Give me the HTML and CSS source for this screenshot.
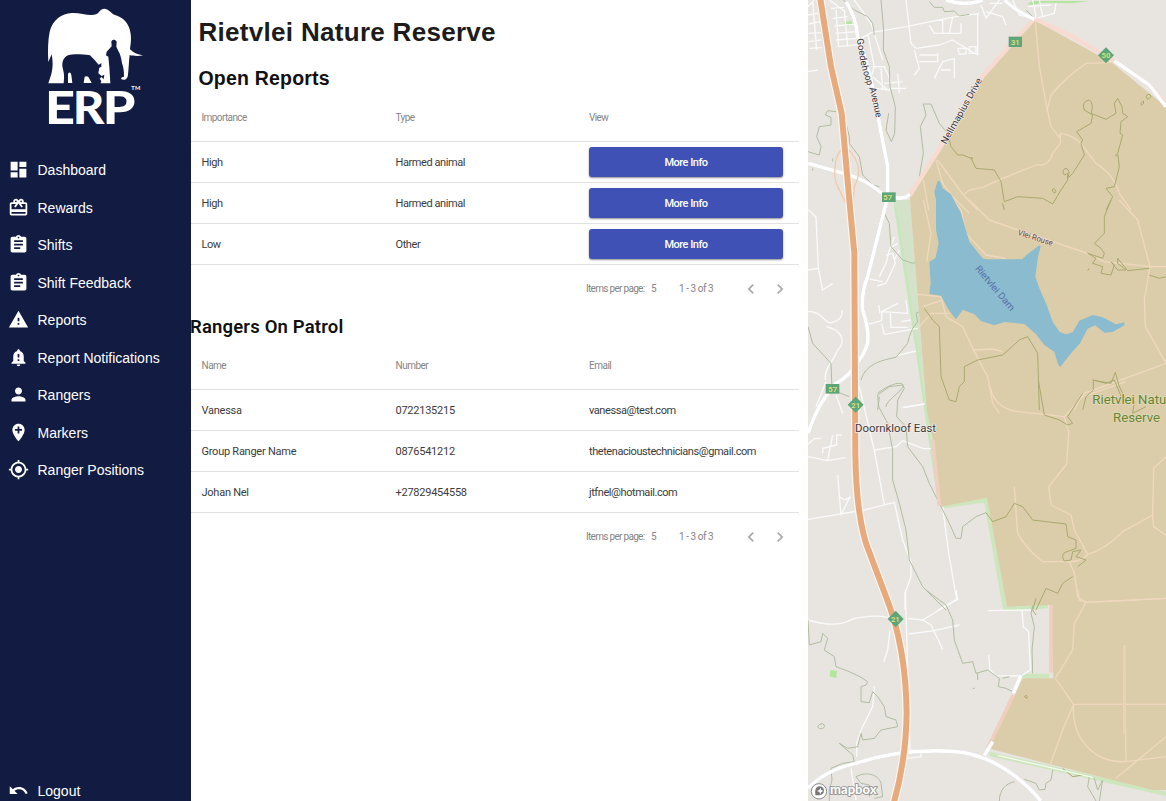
FILE: index.html
```html
<!DOCTYPE html>
<html lang="en">
<head>
<meta charset="utf-8">
<title>ERP Dashboard</title>
<link rel="stylesheet" href="styles.css">
</head>
<body>
<div class="app">
<aside class="sidebar">
  <svg class="logo" viewBox="0 0 573 420">
    <path fill="#fff" d="M145 186C143 150 144 120 149 95C158 60 185 40 215 39C245 38 270 50 290 42C300 36 300 27 313 26C326 26 330 38 345 45C368 52 382 65 389 88C396 112 392 130 390 148C400 158 412 164 429 166C415 169 400 168 389 165C386 190 386 215 383 230C378 241 370 240 364 238C362 233 366 230 372 230C372 215 371 203 366 190C364 175 361 162 355 153L349 140L350 125C345 117 337 118 334 124L335 139L320 155L318 166L325 170L328 200L331 250H301C306 246 304 241 299 236L305 231L311 238L313 224L305 228L295 220L298 203L304 200V190L296 194C288 185 282 178 270 166C245 163 222 161 204 166C188 174 184 190 189 208C194 225 192 238 191 250H145L154 222C160 200 158 180 155 163Z"/>
    <path fill="#fff" d="M204 221Q211 213 214 225L217 249H204ZM254 230Q261 227 266 232L275 249H251Z"/>
    <text class="logo-name" y="371"><tspan x="135" textLength="90" lengthAdjust="spacingAndGlyphs">E</tspan><tspan x="218" textLength="95" lengthAdjust="spacingAndGlyphs">R</tspan><tspan x="308" textLength="98" lengthAdjust="spacingAndGlyphs">P</tspan></text>
    <text class="logo-tm" x="394" y="271" textLength="27">TM</text>
  </svg>
  <nav class="nav">
    <a class="nav-item"><svg viewBox="0 0 24 24"><path d="M3 13h8V3H3v10zm0 8h8v-6H3v6zm10 0h8V11h-8v10zm0-18v6h8V3h-8z"/></svg>Dashboard</a>
    <a class="nav-item"><svg viewBox="0 0 24 24"><path d="M20 6h-2.18c.11-.31.18-.65.18-1 0-1.66-1.34-3-3-3-1.05 0-1.96.54-2.5 1.35l-.5.67-.5-.68C10.96 2.54 10.05 2 9 2 7.34 2 6 3.34 6 5c0 .35.07.69.18 1H4c-1.11 0-1.99.89-1.99 2L2 19c0 1.11.89 2 2 2h16c1.11 0 2-.89 2-2V8c0-1.11-.89-2-2-2zm-5-2c.55 0 1 .45 1 1s-.45 1-1 1-1-.45-1-1 .45-1 1-1zM9 4c.55 0 1 .45 1 1s-.45 1-1 1-1-.45-1-1 .45-1 1-1zm11 15H4v-2h16v2zm0-5H4V8h5.080L7 10.830 8.620 12 11 8.760l1-1.360 1 1.360L15.380 12 17 10.830 14.920 8H20v6z"/></svg>Rewards</a>
    <a class="nav-item"><svg viewBox="0 0 24 24"><path d="M19 3h-4.180C14.400 1.840 13.300 1 12 1c-1.300 0-2.400.840-2.820 2H5c-1.100 0-2 .9-2 2v14c0 1.100.9 2 2 2h14c1.100 0 2-.9 2-2V5c0-1.100-.9-2-2-2zm-7 0c.55 0 1 .45 1 1s-.45 1-1 1-1-.45-1-1 .45-1 1-1zm2 14H7v-2h7v2zm3-4H7v-2h10v2zm0-4H7V7h10v2z"/></svg>Shifts</a>
    <a class="nav-item"><svg viewBox="0 0 24 24"><path d="M19 3h-4.180C14.400 1.840 13.300 1 12 1c-1.300 0-2.400.840-2.820 2H5c-1.100 0-2 .9-2 2v14c0 1.100.9 2 2 2h14c1.100 0 2-.9 2-2V5c0-1.100-.9-2-2-2zm-7 0c.55 0 1 .45 1 1s-.45 1-1 1-1-.45-1-1 .45-1 1-1zm2 14H7v-2h7v2zm3-4H7v-2h10v2zm0-4H7V7h10v2z"/></svg>Shift Feedback</a>
    <a class="nav-item"><svg viewBox="0 0 24 24"><path d="M1 21h22L12 2 1 21zm12-3h-2v-2h2v2zm0-4h-2v-4h2v4z"/></svg>Reports</a>
    <a class="nav-item"><svg viewBox="0 0 24 24"><path d="M18 16v-5c0-3.070-1.640-5.640-4.500-6.320V4c0-.83-.67-1.500-1.500-1.500s-1.500.67-1.500 1.500v.68C7.630 5.360 6 7.920 6 11v5l-2 2v1h16v-1l-2-2zm-5 0h-2v-2h2v2zm0-4h-2V8h2v4zm-1 10c1.100 0 2-.9 2-2h-4c0 1.100.89 2 2 2z"/></svg>Report Notifications</a>
    <a class="nav-item"><svg viewBox="0 0 24 24"><path d="M12 12c2.210 0 4-1.790 4-4s-1.790-4-4-4-4 1.790-4 4 1.790 4 4 4zm0 2c-2.670 0-8 1.340-8 4v2h16v-2c0-2.660-5.330-4-8-4z"/></svg>Rangers</a>
    <a class="nav-item"><svg viewBox="0 0 24 24"><path d="M12 2C8.140 2 5 5.140 5 9c0 5.250 7 13 7 13s7-7.750 7-13c0-3.860-3.140-7-7-7zm4 8h-3v3h-2v-3H8V8h3V5h2v3h3v2z"/></svg>Markers</a>
    <a class="nav-item"><svg viewBox="0 0 24 24"><path d="M12 8c-2.210 0-4 1.790-4 4s1.790 4 4 4 4-1.790 4-4-1.790-4-4-4zm8.940 3c-.46-4.170-3.770-7.480-7.940-7.940V1h-2v2.060C6.830 3.520 3.520 6.830 3.060 11H1v2h2.060c.46 4.170 3.770 7.480 7.940 7.940V23h2v-2.060c4.170-.46 7.480-3.770 7.940-7.940H23v-2h-2.060zM12 19c-3.870 0-7-3.130-7-7s3.130-7 7-7 7 3.130 7 7-3.130 7-7 7z"/></svg>Ranger Positions</a>
  </nav>
  <a class="nav-item logout"><svg viewBox="0 0 24 24"><path d="M12.500 8c-2.650 0-5.050.990-6.900 2.600L2 7v9h9l-3.620-3.620c1.390-1.160 3.160-1.880 5.120-1.880 3.540 0 6.550 2.310 7.600 5.500l2.370-.780C21.080 11.030 17.150 8 12.500 8z"/></svg>Logout</a>
</aside>

<main class="content">
  <h1 class="title">Rietvlei Nature Reserve</h1>
  <h2 class="subtitle">Open Reports</h2>
  <section class="table">
    <div class="row head"><span>Importance</span><span>Type</span><span>View</span></div>
    <div class="row"><span>High</span><span>Harmed animal</span><button class="info">More Info</button></div>
    <div class="row"><span>High</span><span>Harmed animal</span><button class="info">More Info</button></div>
    <div class="row"><span>Low</span><span>Other</span><button class="info">More Info</button></div>
    <div class="pager"><span class="per">Items per page:</span><span class="size">5</span><span class="range">1 - 3 of 3</span>
      <svg viewBox="0 0 24 24"><path d="M15.410 7.410L14 6l-6 6 6 6 1.410-1.410L10.830 12z"/></svg><svg viewBox="0 0 24 24"><path d="M10 6L8.590 7.410 13.170 12l-4.580 4.590L10 18l6-6z"/></svg></div>
  </section>
  <h2 class="subtitle patrol">Rangers On Patrol</h2>
  <section class="table people">
    <div class="row head"><span>Name</span><span>Number</span><span>Email</span></div>
    <div class="row"><span>Vanessa</span><span>0722135215</span><span class="mail">vanessa@test.com</span></div>
    <div class="row"><span>Group Ranger Name</span><span>0876541212</span><span class="mail">thetenacioustechnicians@gmail.com</span></div>
    <div class="row"><span>Johan Nel</span><span>+27829454558</span><span class="mail">jtfnel@hotmail.com</span></div>
    <div class="pager"><span class="per">Items per page:</span><span class="size">5</span><span class="range">1 - 3 of 3</span>
      <svg viewBox="0 0 24 24"><path d="M15.410 7.410L14 6l-6 6 6 6 1.410-1.410L10.830 12z"/></svg><svg viewBox="0 0 24 24"><path d="M10 6L8.590 7.410 13.170 12l-4.580 4.590L10 18l6-6z"/></svg></div>
  </section>
</main>

<svg class="map" viewBox="6 0 1074 2403" preserveAspectRatio="none">
  <rect class="land" x="6" width="1074" height="2403"/>
  <!-- parks and reserve border -->
  <path class="park" d="M113 66L138 62V76L118 78ZM662 12L680 3H850L800 10L710 8L680 15ZM72 2010L93 2012L91 2034L71 2030Z"/>
  <path class="soft" d="M262 600H312L362 1230L405 1520L358 1190L330 1010Z"/>
  <path class="edge" d="M268 620L330 1030L356 1210L400 1515"/>
  <path class="park-line" d="M405 1520L540 1500L597 1825L725 1818M645 2028H730"/>
  <path class="park-line" d="M550 2262L860 2332L1080 2382"/>
  <!-- local roads -->
  <g class="street">
    <path d="M145 0L195 70L230 180M150 125L195 98L300 80L450 50L520 40M300 0L315 130L330 145L400 135M325 150L340 205L325 225M340 165H398M340 185H395V160M400 135L440 120L515 165V40M385 235L410 185L445 175V235M405 210H435M370 75L385 100H465V70M410 55V100M440 50L430 100M185 100L205 200L185 260M200 200H235L255 245M200 230L245 270M225 205L230 270M235 250L290 245M275 220L280 280M250 265L300 265M255 270L205 265M455 145H480V162H460ZM490 140H510V160H490ZM620 0L640 45L690 55L745 40L750 10M665 20L735 15M680 0L690 50M700 0L710 48M70 0L118 35M75 25L115 22M80 55L125 50M85 78L145 73M88 100L150 95M90 120L155 115M95 140L160 134M90 30L98 140M115 30L125 140M6 20L25 0M6 45L35 40M8 72L42 65M8 100L45 98M8 125L45 120M10 145L47 143M20 5L32 150M6 215L35 210M525 15L540 55L580 0M540 35L590 50L600 75M550 10H590"/>
    <path transform="translate(0,600)" d="M6 30L30 50L37 205L50 270L80 250M6 210L37 205M6 335C50 330 55 380 85 365C105 360 110 340 108 330M60 380C110 390 120 425 95 450C80 490 55 500 58 540M265 110L250 150L240 190L220 230M250 145L275 130M240 165L260 160L268 190L240 250L213 258M190 237L230 245M185 373L227 362V335L275 310M218 315L222 340M265 180L280 150M227 335L305 340L300 300M253 340L255 382H305M227 370L235 403L335 385M275 466L330 453M290 622L356 612M315 360L285 365M90 585L110 640M30 620L60 545"/>
    <path transform="translate(0,1140)" d="M6 230L65 242L118 233M65 240L80 165M6 192L25 176L45 175M50 220V205L92 195V165H107M95 285L105 405L132 350M100 350L115 360L135 350M6 418L175 390L265 367L290 480L315 545V590L297 640V690M160 20L205 212L235 373M205 210L270 200L290 182L350 205L375 206M292 83L355 72M410 380L428 520L452 658L395 690"/>
    <path transform="translate(0,1770)" d="M6 90C70 110 110 105 140 87C180 78 210 75 245 82M305 85L350 90L400 60L455 28L450 0M350 90L375 105L410 178M308 132L385 122L460 105M298 0L312 480M252 120L245 180L233 215M547 62L675 60M648 62L652 110L668 125L673 240L645 258L570 257L552 240L548 195M205 290L200 350L165 420L152 460V500M310 480L345 482V500L305 505M135 535L150 630"/>
  </g>
  <!-- contours -->
  <g class="contour">
    <path d="M225 0L233 90L232 150L250 200L252 260L268 320L266 400L256 425L240 390L248 340M6 455L40 465L45 440L32 410L40 380L75 375V352L58 345L65 332L90 335M115 350L130 410V430L160 470L170 525L200 555L220 560M112 0L145 30L185 50L200 70L205 105M340 530L352 460L343 380L360 345L352 312L375 312L400 370L425 400M370 5L385 22H410L415 35L445 33L460 48L490 43M80 475V485M20 505V512M660 30L680 50"/>
    <path transform="translate(0,600)" d="M235 40L250 70L255 140L290 180L320 190L350 180L355 130L340 80L335 40L325 0M165 540C180 490 230 480 270 472L305 430L310 410L320 385L335 365L330 340L360 325M6 380L20 430L75 490L78 570L130 590M215 580C240 560 280 540 292 555C295 570 240 600 240 620M220 590L215 630"/>
    <path transform="translate(0,1140)" d="M245 130L218 80L215 45L250 20L290 15L295 25L275 60L272 110L300 140L305 200L350 260L370 310L400 370L430 430L450 475L465 475L470 440L510 410L540 398M245 130L260 210V300L280 370L300 450L310 540L350 620L420 690"/>
    <path transform="translate(0,1770)" d="M360 0L420 45L440 90L445 150L470 220L500 215L510 250L545 240L580 265L577 290L600 295L620 305M515 250V270M500 295H507M590 265L610 260M6 90L10 165L45 155L50 130L65 145L55 180L85 200L90 230L130 245L165 262L185 275L180 285L165 290V335L190 338L200 305L215 320L235 350L240 380L270 390L275 410L225 420L205 445L170 450L165 430L155 470L125 475L100 460L140 495L145 515L110 520L75 535L78 570L70 600V633M35 410Q45 395 55 405Q57 418 40 416ZM150 560C190 540 220 560 225 580L230 620L205 625M150 560L165 580L190 585V620M580 633C580 600 600 580 625 575M655 568L690 580L700 600L717 598L720 580L735 570L740 540M850 560L845 590L870 633M865 565L875 600L890 570L880 633M690 0L675 70L685 110L678 180L680 250"/>
  </g>
  <!-- reserve -->
  <path class="reserve" d="M685 60L530 235L400 450L312 585V600L362 1230L378 1310L405 1520L543 1493L603 1820L735 1815L742 2035H650L600 2140L545 2245L780 2305L1040 2370H1080V320L920 190Z"/>
  <path class="pink-line" d="M685 55L530 228L395 455L312 585M690 58L800 110L925 182L1030 255L1080 310"/>
  <path class="pink-thin" d="M380 1320L400 1518M735 1815V2018M622 2085L545 2245"/>
  <g class="trail">
    <path d="M688 65L700 200L722 320L735 380L763 415M922 187L840 190Q775 235 735 285L722 335M763 430V400Q810 405 840 450L870 490Q925 525 940 580L975 630M763 430L740 460Q730 500 690 495L590 535L530 562L490 570L472 585M395 480L472 585L515 630M352 540L368 630M390 480L410 550L440 590L490 640"/>
    <path transform="translate(0,600)" d="M352 0L375 100L362 185M440 0L465 30L480 100L540 165L600 175M490 0L550 60L650 95L830 155L895 185L1035 200H1080M940 0L995 60L1032 200L1015 300L1018 380L1080 490L830 582L805 630M333 283L405 290L420 350L470 380L500 445L545 530L560 610L580 640M350 320L410 300M340 380L375 340L430 340M500 450L560 447L590 455"/>
    <path transform="translate(0,1140)" d="M552 20Q565 85 635 95L775 110L830 50L960 5M775 110L788 155L782 252L728 320L735 375L795 405L805 450L845 523Q830 545 790 545L710 545Q655 500 635 460L625 320M845 523Q895 510 950 455L1040 405L1043 265L1080 230M1040 405L1043 440L1080 465M790 545L805 580L815 650L840 667L1080 655"/>
    <path transform="translate(0,1770)" d="M815 0L820 30L840 37L1080 25M840 37L805 100L800 180L748 265L803 343L770 420L732 525M803 343H1080M803 343C795 440 860 520 960 515L1080 500M955 165L960 515M1080 440L930 565"/>
    <path class="strip" d="M955 1935V2200"/>
  </g>
  <g class="contour dark">
    <path d="M425 400L435 440L455 465H470L495 475L510 505L565 510L585 545L595 605L635 590L710 595L740 612L765 570L785 540V520L775 525Q765 510 780 505Q795 510 785 535L800 520L835 465L825 430L830 420L812 395L855 370L860 345L835 330Q825 305 850 300Q865 310 855 340L900 358L930 340L925 310L935 295L948 320L950 340L965 350L945 365L942 400L950 405L935 460L940 500L925 560L900 565L920 590L900 630M738 570Q745 560 750 575Q745 585 738 570M495 472Q502 472 498 478M930 462V470M590 610L595 630M1005 310Q1015 295 1012 312Q1005 320 1005 310M1020 290Q1030 275 1035 290Q1025 305 1020 290"/>
    <path transform="translate(0,600)" d="M355 325L380 360L400 380L405 530L430 600L450 605L460 560L475 545V500L515 480L590 465L640 420L665 410L695 460L700 630M915 0L895 50V100L865 130L885 145L895 160L890 175L845 160L870 175L860 190L890 200L885 220L915 225L925 195L915 185L935 210L960 210L935 190L935 175L965 212L1030 205M1030 225L1060 235L1080 230M850 205L845 212M862 570V540L885 545L915 550L928 517L940 560L955 590M862 570L840 590L830 630"/>
    <path transform="translate(0,1140)" d="M540 398L560 425L600 410L625 370L650 380L680 420L780 432L785 470L810 480V505L775 518Q765 530 775 543L795 540L800 515L825 510L810 530L840 540L815 560M697 0L715 105L760 120L785 135L800 130L785 110L830 40M800 590L770 610L755 640L720 625L690 690M860 0L900 10L925 0L950 60L985 65L980 100L1020 80"/>
    <path d="M655 2090Q665 2080 663 2095ZM690 1795L680 1830L690 1845M770 2305L800 2330L830 2325"/>
  </g>
  <!-- dam -->
  <path class="water" d="M395 543L402 544L410 565L435 583L450 612L465 640L490 725L530 775L540 778H648L665 762L700 736L704 740L696 770L688 830L700 865L722 915L740 965L760 995L780 1003L800 997L820 962L860 945L890 952L930 973L955 967V976L920 996L895 998L867 976L845 986L822 1030L795 1060L762 1102L755 1090L745 1055L715 1035L690 1003L655 972L595 966L565 976L525 963L505 943L470 929L450 958L428 930L405 887L370 882L374 850L370 785L388 775L398 730L390 690V600L385 575Z"/>
  <!-- primary roads -->
  <g class="road">
    <path d="M120 5Q150 50 155 110Q200 230 220 370L245 500V590L235 630L185 830Q165 880 170 930Q190 990 185 1030Q175 1060 160 1080Q130 1130 90 1150Q35 1210 6 1300"/>
    <path d="M6 490L130 525Q180 540 225 578Q260 600 300 592L312 583"/>
    <path d="M420 0Q480 20 530 0M595 0Q640 40 685 58"/>
    <path d="M925 182L1030 255L1080 320"/>
    <path d="M6 2365Q60 2310 150 2290Q300 2240 470 2257Q600 2280 705 2403M535 2267L560 2225M622 2080L645 2025"/>
  </g>
  <path class="verge" d="M575 2266L860 2332"/>
  <path class="ramp" d="M105 450C85 470 80 530 95 560L120 610M125 445C165 490 165 520 145 560L140 620"/>
  <path class="highway-case" d="M42 -10L75 200L107 340L130 600L145 760L148 1360Q150 1530 180 1630L240 1790Q300 1940 302 2140Q300 2280 263 2410"/>
  <path class="highway" d="M42 -10L75 200L107 340L130 600L145 760L148 1360Q150 1530 180 1630L240 1790Q300 1940 302 2140Q300 2280 263 2410"/>
  <g class="shield">
    <rect x="608" y="110" width="40" height="31"/><rect x="228" y="577" width="41" height="29"/><rect x="59" y="1152" width="41" height="29"/>
    <path d="M900 142L924 166L900 190L876 166ZM149 1190L173 1214L149 1238L125 1214ZM269 1832L293 1857L269 1882L245 1857Z"/>
    <text x="628" y="134">31</text><text x="245" y="600">57</text><text x="80" y="1175">57</text><text x="900" y="174">50</text><text x="149" y="1223">21</text><text x="268" y="1865">21</text>
  </g>
  <g class="label">
    <text transform="translate(152,117) rotate(80)" textLength="98" lengthAdjust="spacingAndGlyphs">Goedeh</text>
    <text transform="translate(171,216) rotate(72)" textLength="43" lengthAdjust="spacingAndGlyphs">oop</text>
    <text transform="translate(190,264) rotate(77)" textLength="92" lengthAdjust="spacingAndGlyphs">Avenue</text>
    <text transform="translate(420,434) rotate(-60.500)" textLength="222" lengthAdjust="spacingAndGlyphs">Nellmapius Drive</text>
    <text class="small" transform="translate(634,704) rotate(18)" textLength="109" lengthAdjust="spacingAndGlyphs">Vlei Rouse</text>
    <text class="dam" transform="translate(506,806) rotate(50)" textLength="168" lengthAdjust="spacingAndGlyphs">Rietvlei Dam</text>
    <text class="place" x="147" y="1296" textLength="243" lengthAdjust="spacingAndGlyphs">Doornkloof East</text>
    <text class="nature" x="859" y="1212" textLength="256" lengthAdjust="spacingAndGlyphs">Rietvlei Nature</text>
    <text class="nature" x="921" y="1266" textLength="141" lengthAdjust="spacingAndGlyphs">Reserve</text>
  </g>
  <g class="brand">
    <circle class="ring" cx="39" cy="2374" r="23"/><circle class="disc" cx="41" cy="2372" r="13"/><path class="tail" d="M28 2372V2386H41Z"/><path class="star" d="M43 2363L46 2370L53 2373L46 2376L43 2383L40 2376L33 2373L40 2370Z"/>
    <text x="72" y="2383" textLength="140" lengthAdjust="spacingAndGlyphs">mapbox</text>
  </g>
</svg>
</div>
</body>
</html>
```

FILE: styles.css
```css
* { box-sizing: border-box; }
body { margin: 0; background: #fff; font-family: "Liberation Sans", Arial, sans-serif; }
.app { display: flex; width: 1166px; height: 801px; overflow: hidden; }

.sidebar { display: flex; flex-direction: column; flex: 0 0 191px; background: #121b42; color: #fff; }
.logo { width: 191px; height: 140px; flex: none; }
.logo-name { font: 900 138px Lato, sans-serif; fill: #fff; }
.logo-tm { font: 700 17px Lato, sans-serif; fill: #fff; }
.nav { display: flex; flex-direction: column; padding-top: 11.250px; }
.nav-item { display: flex; align-items: center; gap: 9px; height: 37.500px; padding-left: 7.500px; font-size: 14px; color: #fff; white-space: nowrap; }
.nav-item svg { width: 21px; height: 21px; margin-bottom: 1px; fill: #fff; }
.logout { margin-top: auto; margin-bottom: -8.500px; }

.content { flex: 0 0 608px; display: flex; flex-direction: column; color: #1c1c1c; }
.title { margin: 16px 0 0 7.500px; font-size: 26px; line-height: 32px; letter-spacing: .3px; white-space: nowrap; }
.subtitle { margin: 18px 0 0 7.500px; height: 27px; font-size: 19.500px; line-height: 24px; letter-spacing: .2px; color: #111; }
.patrol { margin: 3px 0 0 -1px; height: 26px; font-family: Roboto, sans-serif; font-weight: 600; font-size: 18.500px; letter-spacing: .17px; }
.table { display: flex; flex-direction: column; font-family: Roboto, "Liberation Sans", sans-serif; }
.row { display: grid; grid-template-columns: 194px 193.500px 194px; align-items: center; height: 41px; padding-left: 10.500px; border-bottom: 1px solid #e2e2e2; font-size: 11px; letter-spacing: -.42px; color: #3c3c3c; }
.people .row { letter-spacing: -.25px; }
.people .mail { letter-spacing: -.43px; }
.row.head, .people .row.head { height: 49px; font-size: 10px; letter-spacing: -.6px; color: #858585; }
.people .row.head { letter-spacing: -.5px; }
.info { height: 30px; padding: 0; border: 0; border-radius: 3px; background: #3f51b5; color: #fff; font: 500 11px Roboto, sans-serif; letter-spacing: -.5px; box-shadow: 0 1px 2px rgba(0,0,0,.45); }
.pager { display: flex; align-items: center; height: 47px; padding-left: 395px; font-size: 10px; letter-spacing: -.45px; color: #858585; white-space: nowrap; }
.per { width: 65px; letter-spacing: -.7px; }
.size { width: 28px; }
.range { width: 62px; }
.pager svg { width: 20px; height: 20px; margin-right: 9px; fill: #a9a9a9; }

.map { width: 358px; height: 801px; margin-left: 9px; flex: none; }
.map path { fill: none; stroke-linejoin: round; }
.map .land { fill: #e8e5e1; }
.map .park { fill: #b4e6a0; }
.map .soft { fill: #d3e2c9; }
.map .edge { stroke: #c5e8ba; stroke-width: 8; }
.map .park-line { stroke: #cde6bd; stroke-width: 13; }
.map .reserve { fill: #dccdaa; }
.map .water { fill: #8abbce; }
.map .verge { stroke: #f4faee; stroke-width: 4; }
.street path { stroke: #fafafa; stroke-width: 4; }
.contour path { stroke: #b0bda0; stroke-width: 3; }
.contour.dark path { stroke: #a8a96f; }
.trail path { stroke: #efd8be; stroke-width: 4; }
.trail .strip { stroke: #e9d2b6; stroke-width: 8; }
.map .pink-line { stroke: #f8dbd0; stroke-width: 13; }
.map .pink-thin { stroke: #efcfbf; stroke-width: 11; }
.road path { stroke: #fff; stroke-width: 11; filter: drop-shadow(0 0 2px #c9c9df); }
.map .ramp { stroke: #f3c9ab; stroke-width: 4; }
.map .highway-case { stroke: #fbf7f3; stroke-width: 25; }
.map .highway { stroke: #e7aa7d; stroke-width: 18; }
.shield rect, .map .shield path { fill: #5da679; }
.shield text { font: 700 23px Roboto, sans-serif; fill: #d9dd7b; text-anchor: middle; }
.label text { font: 400 28px Roboto, sans-serif; fill: #3a353b; stroke: #f3eeea; stroke-width: 4; paint-order: stroke; }
.label .small { font-size: 24px; fill: #674745; stroke: #eadbc8; }
.label .dam { fill: #586eaa; stroke: none; }
.label .place { font-size: 35px; fill: #3d3d3d; }
.label .nature { font-size: 38px; fill: #66862f; stroke: #e3dabb; }
.brand .ring { fill: #fff; stroke: #8d8d8d; stroke-width: 3; }
.brand .disc, .map .tail { fill: #777; }
.map .star { fill: #fff; }
.brand text { font: 900 38px Lato, sans-serif; fill: #fff; stroke: #8d8d8d; stroke-width: 5; paint-order: stroke; }
```
